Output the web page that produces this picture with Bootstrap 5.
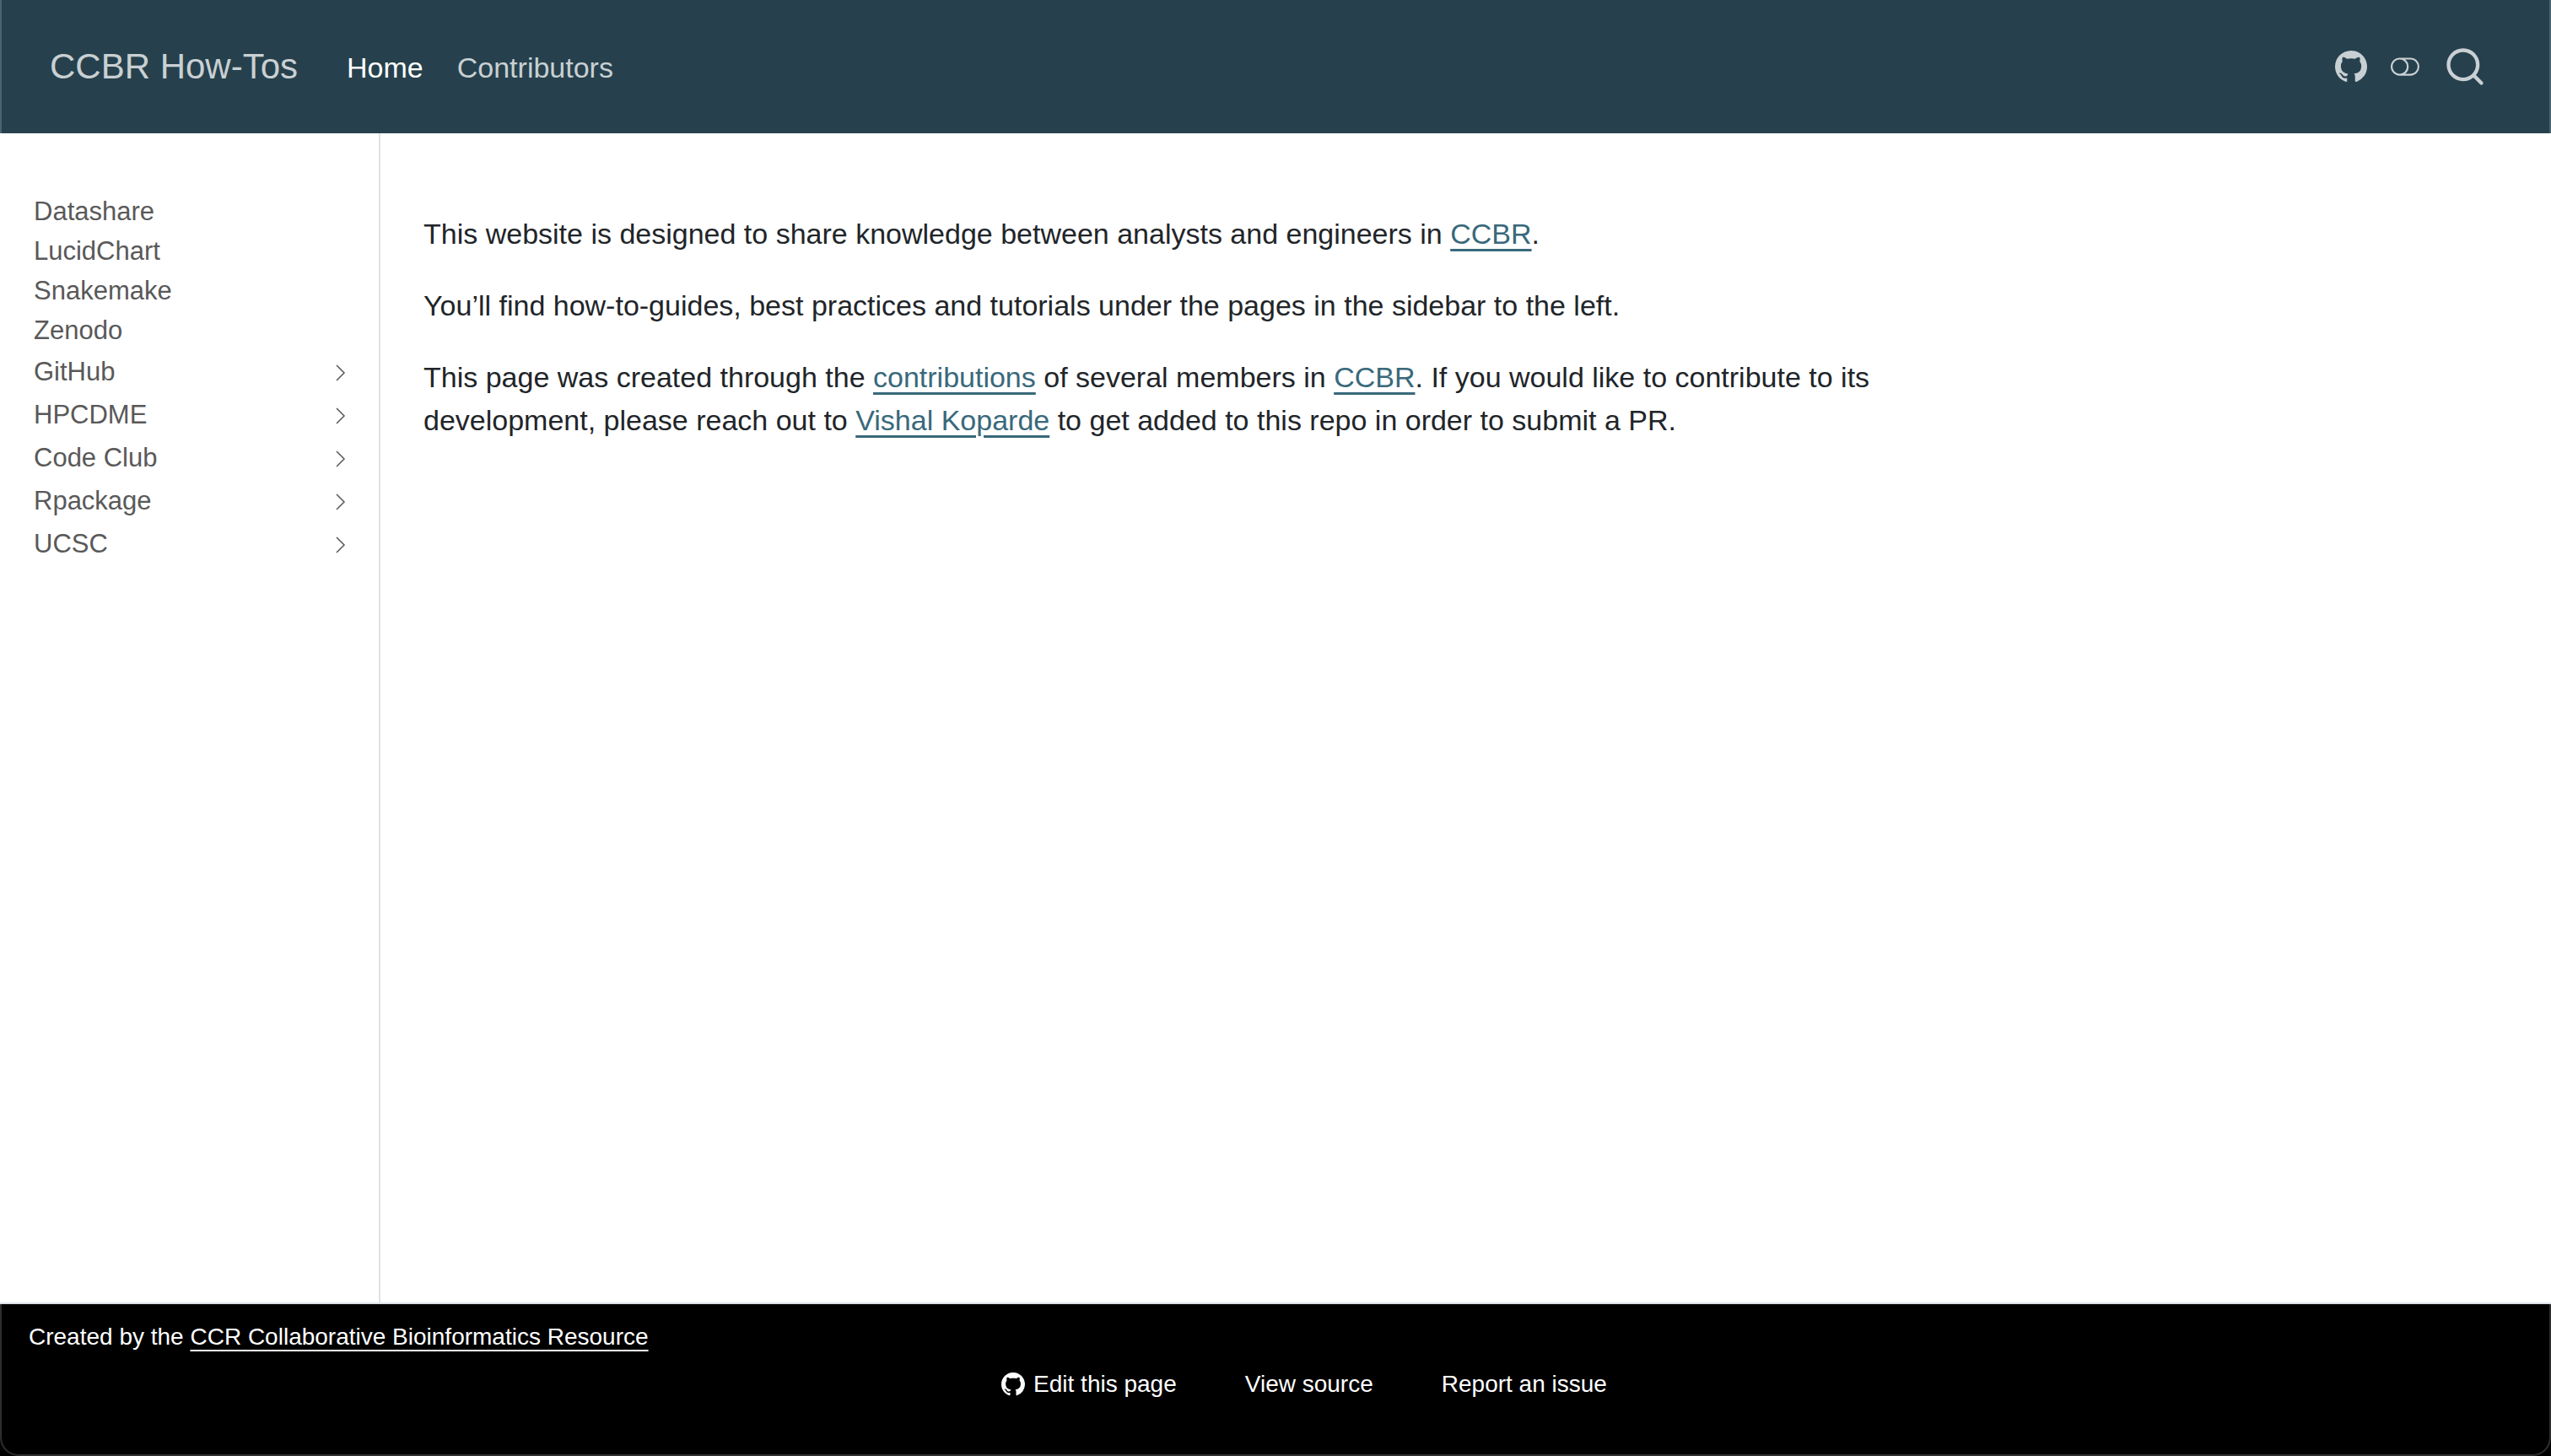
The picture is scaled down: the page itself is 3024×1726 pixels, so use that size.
<!DOCTYPE html>
<html lang="en">
<head>
<meta charset="utf-8">
<meta name="viewport" content="width=device-width, initial-scale=1">
<title>CCBR How-Tos</title>
<link href="https://cdn.jsdelivr.net/npm/bootstrap@5.3.0/dist/css/bootstrap.min.css" rel="stylesheet">
<style>
  body { font-family: "Liberation Sans", Arial, sans-serif; font-size: 34px; line-height: 51px; color: #212529; background: #fff; }
  .site-header { background: #26414d; height: 158px; padding: 0 74px 0 57px; border: solid #4a656f; border-width: 0 2px; }
  .site-header .navbar-brand { font-size: 42px; line-height: 64px; color: #c9d0d3; padding: 0; margin: 0 50px 0 0; }
  .site-header .nav-link { color: #c9d0d3; padding: 0; }
  .site-header .nav-link.active { color: #fff; }
  .site-header .navbar-nav { gap: 24px; padding-top: 2px; }
  .tool-icons { gap: 28px; color: #c9d0d3; }
  .tool-icons a, .tool-icons button { color: inherit; line-height: 0; }
  .tool-icons .btn { padding: 0; border: 0; }
  svg { fill: currentColor; flex: none; display: block; }
  .side-menu { width: 451px; border-right: 2px solid #dee2e6; padding: 71px 35px 0 40px; }
  .side-menu li { font-size: 31px; line-height: 43px; padding-bottom: 4px; }
  .side-menu li.has-children { line-height: 47px; }
  .side-menu svg { fill: none; stroke: currentColor; stroke-width: 1.5; margin-top: 2px; }
  .side-menu a { color: #595959; text-decoration: none; }
  .content-area { padding: 94px 51px 0; max-width: 1850px; }
  .content-area p { margin-bottom: 34px; }
  .content-area a { color: #39697b; text-decoration-thickness: 3px; text-underline-offset: 6px; }
  .footer-wrap { background: #000; }
  .site-footer { color: #fff; border: 2px solid #2e2e2e; border-top: 0; border-radius: 0 0 22px 22px; font-size: 28px; line-height: 42px; padding: 18px 32px 60px; min-height: 180px; }
  .footer-rule { border-top: 2px solid #dee2e6; }
  .site-footer a { color: #fff; text-decoration: none; }
  .site-footer .credit a { text-decoration: underline; text-decoration-thickness: 2px; text-underline-offset: 6px; text-decoration-skip-ink: none; }
  .page-actions { gap: 81px; padding: 56px 0 0 68px; }
  .page-actions a { gap: 10px; }
</style>
</head>
<body class="d-flex flex-column min-vh-100">
<header class="site-header navbar navbar-expand flex-nowrap">
  <a class="navbar-brand" href="#">CCBR How-Tos</a>
  <ul class="navbar-nav me-auto">
    <li class="nav-item"><a class="nav-link active" href="#" aria-current="page">Home</a></li>
    <li class="nav-item"><a class="nav-link" href="#">Contributors</a></li>
  </ul>
  <div class="tool-icons d-flex align-items-center">
    <a href="#" aria-label="GitHub"><svg width="38" height="38" viewBox="0 0 16 16"><path d="M8 0C3.58 0 0 3.58 0 8c0 3.54 2.29 6.53 5.47 7.59.4.07.55-.17.55-.38 0-.19-.01-.82-.01-1.49-2.01.37-2.53-.49-2.69-.94-.09-.23-.48-.94-.82-1.13-.28-.15-.68-.52-.01-.53.63-.01 1.08.58 1.23.82.72 1.21 1.87.87 2.33.66.07-.52.28-.87.51-1.07-1.78-.2-3.64-.89-3.64-3.95 0-.87.31-1.59.82-2.15-.08-.2-.36-1.02.08-2.12 0 0 .67-.21 2.2.82.64-.18 1.32-.27 2-.27s1.36.09 2 .27c1.53-1.04 2.2-.82 2.2-.82.44 1.1.16 1.92.08 2.12.51.56.82 1.27.82 2.15 0 3.07-1.87 3.75-3.65 3.95.29.25.54.73.54 1.48 0 1.07-.01 1.93-.01 2.2 0 .21.15.46.55.38A8.01 8.01 0 0 0 16 8c0-4.42-3.58-8-8-8"/></svg></a>
    <button class="btn" type="button" aria-label="Toggle dark mode"><svg width="34" height="34" viewBox="0 0 16 16"><path d="M11 4a4 4 0 0 1 0 8H8a5 5 0 0 0 2-4 5 5 0 0 0-2-4zm-6 8a4 4 0 1 1 0-8 4 4 0 0 1 0 8M0 8a5 5 0 0 0 5 5h6a5 5 0 0 0 0-10H5a5 5 0 0 0-5 5"/></svg></button>
    <button class="btn" type="button" aria-label="Search"><svg width="52" height="52" viewBox="0 0 24 24"><path d="M16.041 15.856c-0.034 0.026-0.067 0.055-0.099 0.087s-0.060 0.064-0.087 0.099c-1.258 1.213-2.969 1.958-4.855 1.958-1.933 0-3.682-0.782-4.950-2.050s-2.050-3.017-2.050-4.950 0.782-3.682 2.050-4.950 3.017-2.050 4.950-2.050 3.682 0.782 4.950 2.050 2.050 3.017 2.050 4.950c0 1.886-0.745 3.597-1.959 4.856zM21.707 20.293l-3.675-3.675c1.231-1.540 1.968-3.493 1.968-5.618 0-2.485-1.008-4.736-2.636-6.364s-3.879-2.636-6.364-2.636-4.736 1.008-6.364 2.636-2.636 3.879-2.636 6.364 1.008 4.736 2.636 6.364 3.879 2.636 6.364 2.636c2.125 0 4.078-0.737 5.618-1.968l3.675 3.675c0.391 0.391 1.024 0.391 1.414 0s0.391-1.024 0-1.414z"/></svg></button>
  </div>
</header>
<div class="d-flex flex-grow-1">
  <nav class="side-menu flex-shrink-0" aria-label="Pages">
    <ul class="list-unstyled mb-0">
      <li><a href="#">Datashare</a></li>
      <li><a href="#">LucidChart</a></li>
      <li><a href="#">Snakemake</a></li>
      <li><a href="#">Zenodo</a></li>
      <li class="has-children"><a class="d-flex justify-content-between align-items-center" href="#">GitHub<svg width="20" height="20" viewBox="0 0 20 20"><path d="M5 1l9 9-9 9"/></svg></a></li>
      <li class="has-children"><a class="d-flex justify-content-between align-items-center" href="#">HPCDME<svg width="20" height="20" viewBox="0 0 20 20"><path d="M5 1l9 9-9 9"/></svg></a></li>
      <li class="has-children"><a class="d-flex justify-content-between align-items-center" href="#">Code Club<svg width="20" height="20" viewBox="0 0 20 20"><path d="M5 1l9 9-9 9"/></svg></a></li>
      <li class="has-children"><a class="d-flex justify-content-between align-items-center" href="#">Rpackage<svg width="20" height="20" viewBox="0 0 20 20"><path d="M5 1l9 9-9 9"/></svg></a></li>
      <li class="has-children"><a class="d-flex justify-content-between align-items-center" href="#">UCSC<svg width="20" height="20" viewBox="0 0 20 20"><path d="M5 1l9 9-9 9"/></svg></a></li>
    </ul>
  </nav>
  <main class="content-area flex-grow-1">
    <p>This website is designed to share knowledge between analysts and engineers in <a href="#">CCBR</a>.</p>
    <p>You’ll find how-to-guides, best practices and tutorials under the pages in the sidebar to the left.</p>
    <p>This page was created through the <a href="#">contributions</a> of several members in <a href="#">CCBR</a>. If you would like to contribute to its development, please reach out to <a href="#">Vishal Koparde</a> to get added to this repo in order to submit a PR.</p>
  </main>
</div>
<div class="footer-wrap footer-rule">
  <footer class="site-footer">
    <div class="row g-0">
      <div class="col credit">Created by the <a href="#">CCR Collaborative Bioinformatics Resource</a></div>
      <div class="col">
        <ul class="page-actions list-unstyled d-flex justify-content-center mb-0 text-nowrap">
          <li><a class="d-flex align-items-center" href="#"><svg width="28" height="28" viewBox="0 0 16 16"><path d="M8 0C3.58 0 0 3.58 0 8c0 3.54 2.29 6.53 5.47 7.59.4.07.55-.17.55-.38 0-.19-.01-.82-.01-1.49-2.01.37-2.53-.49-2.69-.94-.09-.23-.48-.94-.82-1.13-.28-.15-.68-.52-.01-.53.63-.01 1.08.58 1.23.82.72 1.21 1.87.87 2.33.66.07-.52.28-.87.51-1.07-1.78-.2-3.64-.89-3.64-3.95 0-.87.31-1.59.82-2.15-.08-.2-.36-1.02.08-2.12 0 0 .67-.21 2.2.82.64-.18 1.32-.27 2-.27s1.36.09 2 .27c1.53-1.04 2.2-.82 2.2-.82.44 1.1.16 1.92.08 2.12.51.56.82 1.27.82 2.15 0 3.07-1.87 3.75-3.65 3.95.29.25.54.73.54 1.48 0 1.07-.01 1.93-.01 2.2 0 .21.15.46.55.38A8.01 8.01 0 0 0 16 8c0-4.42-3.58-8-8-8"/></svg>Edit this page</a></li>
          <li><a href="#">View source</a></li>
          <li><a href="#">Report an issue</a></li>
        </ul>
      </div>
      <div class="col"></div>
    </div>
  </footer>
</div>
<script src="https://cdn.jsdelivr.net/npm/bootstrap@5.3.0/dist/js/bootstrap.bundle.min.js"></script>
</body>
</html>
